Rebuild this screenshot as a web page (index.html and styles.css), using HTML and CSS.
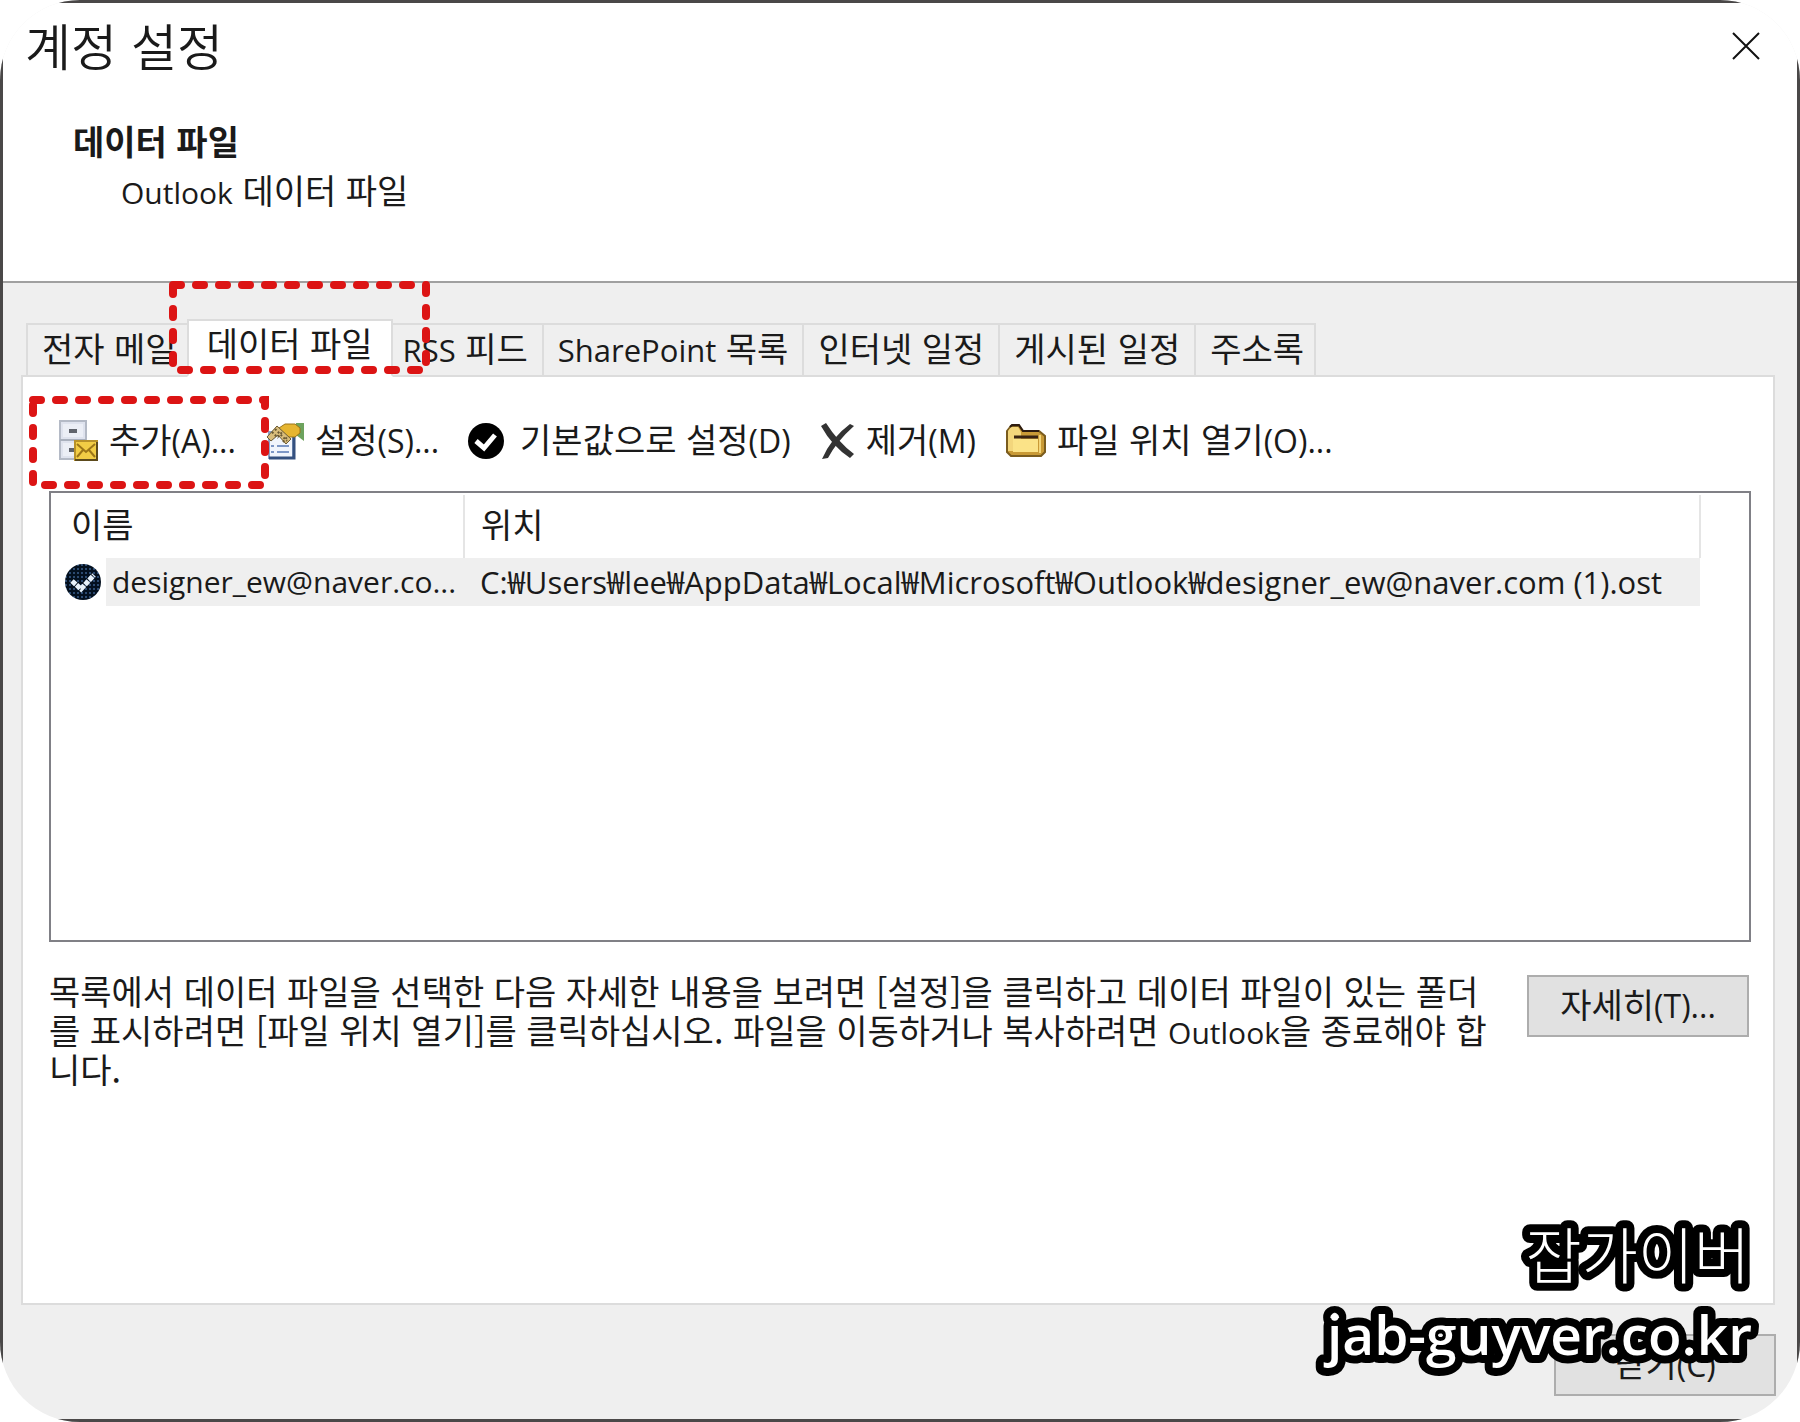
FILE: index.html
```html
<!DOCTYPE html>
<html lang="ko">
<head>
  <meta charset="UTF-8">
  <meta name="viewport" content="width=device-width, initial-scale=1.0">
  <title>계정 설정</title>
  <link rel="stylesheet" href="styles.css">
</head>
<body>
  <div class="frame">
    <div class="window">
      <!-- Header -->
      <header class="header">
        <div class="title-bar">
          <h1>계정 설정</h1>
          <button type="button" class="btn-close" aria-label="닫기">
            <svg width="28" height="28" viewBox="0 0 28 28"><path d="M1 1L27 27M27 1L1 27" stroke="#111" stroke-width="2" fill="none"/></svg>
          </button>
        </div>
        <h2>데이터 파일</h2>
        <p class="subtitle"><span class="latin">Outlook</span> 데이터 파일</p>
      </header>

      <main class="content">
        <!-- Tabs -->
        <div class="tabs" role="tablist">
          <button type="button" class="tab" role="tab">전자 메일</button>
          <button type="button" class="tab active" role="tab" aria-selected="true">데이터 파일</button>
          <button type="button" class="tab" role="tab"><span class="latin">RSS</span> 피드</button>
          <button type="button" class="tab" role="tab"><span class="latin">SharePoint</span> 목록</button>
          <button type="button" class="tab" role="tab">인터넷 일정</button>
          <button type="button" class="tab" role="tab">게시된 일정</button>
          <button type="button" class="tab" role="tab">주소록</button>
          <svg class="mark mark-tab" width="262" height="94" viewBox="0 0 262 94"><rect x="4" y="4" width="253" height="85"/></svg>
        </div>

        <section class="panel" role="tabpanel">
          <!-- Toolbar -->
          <div class="toolbar">
            <button type="button" class="tool">
              <svg width="40" height="42" viewBox="0 0 40 42">
                <path d="M1 1H27V39H1Z" fill="#dfe3ee" stroke="#b4bac6" stroke-width="2"/>
                <path d="M4 4H24V17H4ZM4 23H24V36H4Z" fill="#eceff6"/>
                <path d="M1 20H27" stroke="#a9b0bd" stroke-width="2"/>
                <path d="M10 11H18M10 30H16" stroke="#60646c" stroke-width="4"/>
                <path d="M16 21H38V40H16Z" fill="#f2cd45" stroke="#b8922a" stroke-width="2"/>
                <path d="M16 40H38V22" stroke="#5c4a1c" stroke-width="2" fill="none"/>
                <path d="M18 24L27 32L36 24M18 37L24 30M36 37L30 30" stroke="#9c7618" stroke-width="2" fill="none"/>
              </svg>
              <span>추가<span class="latin">(A)...</span></span>
            </button>
            <button type="button" class="tool">
              <svg width="40" height="42" viewBox="0 0 40 42">
                <path d="M4 12H28V38H4Z" fill="#f1f5fc" stroke="#8ba2c8" stroke-width="2"/>
                <path d="M4 38H29V14" fill="none" stroke="#34507f" stroke-width="3"/>
                <path d="M12 26H24M12 32H24M6 26H9M6 32H9" stroke="#7d97c6" stroke-width="2"/>
                <path d="M31 3H39V21L31 15Z" fill="#6da35e"/>
                <path d="M14 8L20 4H30L35 8V13L30 17H22L14 12Z" fill="#e6b530" stroke="#9a7418" stroke-width="1"/>
                <path d="M2 17L12 6L26 19L21 24L13 15L6 21Z" fill="#d9bd7c" stroke="#6b5a34" stroke-width="1"/>
                <path d="M7 12L13 18M10 9L22 21M13 17L18 11M18 22L23 16" stroke="#6b5a34" stroke-width="2" stroke-dasharray="2 2"/>
              </svg>
              <span>설정<span class="latin">(S)...</span></span>
            </button>
            <button type="button" class="tool">
              <svg width="42" height="38" viewBox="0 0 42 38">
                <circle cx="18" cy="19" r="18" fill="#000"/>
                <path d="M8 19L16 26L27 13" stroke="#fff" stroke-width="5" fill="none"/>
              </svg>
              <span>기본값으로 설정<span class="latin">(D)</span></span>
            </button>
            <button type="button" class="tool">
              <svg width="36" height="38" viewBox="0 0 36 38">
                <path d="M1 4L6 1Q18 20 34 32L30 36Q12 24 1 4Z" fill="#333"/>
                <path d="M30 2L34 4Q17 19 8 36L2 37Q11 16 30 2Z" fill="#333"/>
              </svg>
              <span>제거<span class="latin">(M)</span></span>
            </button>
            <button type="button" class="tool">
              <svg width="42" height="36" viewBox="0 0 42 36">
                <path d="M2 29V8L6 3H14L18 8H34L40 13V29L36 33H6Z" fill="#c99a36" stroke="#7a5c1e" stroke-width="2"/>
                <path d="M3 28V8L6 4H13L16 9V28Z" fill="#f3d67c"/>
                <path d="M5 4L7 2H14L18 8H34" fill="none" stroke="#2e1c10" stroke-width="2"/>
                <path d="M9 14H33" stroke="#3a2412" stroke-width="3"/>
                <path d="M8 16H33V29H8Z" fill="#fbe388"/>
                <path d="M35 12V30" stroke="#f3d67c" stroke-width="2"/>
              </svg>
              <span>파일 위치 열기<span class="latin">(O)...</span></span>
            </button>
            <svg class="mark mark-tool" width="241" height="94" viewBox="0 0 241 94"><rect x="4" y="4" width="232" height="85"/></svg>
          </div>

          <!-- Data file list -->
          <div class="list">
            <table>
              <thead>
                <tr>
                  <th class="col-name">이름</th>
                  <th>위치</th>
                </tr>
              </thead>
              <tbody>
                <tr>
                  <td class="cell-name">
                    <div class="file">
                      <svg width="38" height="38" viewBox="0 0 38 38">
                        <defs>
                          <pattern id="dots" width="4" height="4" patternUnits="userSpaceOnUse">
                            <rect width="4" height="4" fill="#03101f"/>
                            <rect x="1" y="1" width="2" height="2" fill="#2c4a70"/>
                          </pattern>
                        </defs>
                        <circle cx="19" cy="19" r="18" fill="url(#dots)"/>
                        <path d="M8 18L17 26L30 12" stroke="#e8f2fb" stroke-width="5" stroke-dasharray="5 1" fill="none"/>
                      </svg>
                      <span class="latin">designer_ew@naver.co...</span>
                    </div>
                  </td>
                  <td class="cell-path"><span class="latin">C:₩Users₩lee₩AppData₩Local₩Microsoft₩Outlook₩designer_ew@naver.com (1).ost</span></td>
                </tr>
              </tbody>
            </table>
          </div>

          <!-- Help text -->
          <div class="help">
            <p>목록에서 데이터 파일을 선택한 다음 자세한 내용을 보려면 [설정]을 클릭하고 데이터 파일이 있는 폴더<br>를 표시하려면 [파일 위치 열기]를 클릭하십시오. 파일을 이동하거나 복사하려면 <span class="latin">Outlook</span>을 종료해야 합<br>니다.</p>
            <button type="button" class="btn">자세히<span class="latin">(T)...</span></button>
          </div>
        </section>
      </main>

      <footer class="footer">
        <button type="button" class="btn">닫기<span class="latin">(C)</span></button>
      </footer>
    </div>

    <!-- Watermark -->
    <svg class="watermark" width="520" height="220" viewBox="0 0 520 220">
      <text class="mark-name" x="470" y="77">잡가이버</text>
      <text class="mark-url" x="472" y="153">jab-guyver.co.kr</text>
    </svg>
  </div>
</body>
</html>
```
FILE: styles.css
```css
/* Global reset */
* {
  margin: 0;
  padding: 0;
  box-sizing: border-box;
}

body {
  font-family: 'Noto Sans CJK KR', sans-serif;
  font-size: 34px;
  line-height: 40px;
  color: #1a1a1a;
  background-color: #fff;
}

button {
  font: inherit;
  color: inherit;
  cursor: pointer;
}

svg {
  display: block;
  flex: none;
}

.latin {
  font-family: 'Open Sans', 'Noto Sans CJK KR', sans-serif;
  font-size: 30px;
  line-height: 1;
}

/* Window */
.frame {
  position: relative;
  display: flex;
  min-height: 100vh;
  border-radius: 80px;
  overflow: hidden;
}

.window {
  flex: 1;
  display: flex;
  flex-direction: column;
  background-color: #efefef;
  border: 3px solid #4a4848;
}

/* Header */
.header {
  height: 280px;
  background-color: #fff;
  border-bottom: 2px solid #a0a0a0;
}

.title-bar {
  display: flex;
  justify-content: space-between;
  align-items: center;
  height: 86px;
  padding: 0 37px 4px 22px;
}

h1 {
  font-size: 50px;
  font-weight: 350;
}

.btn-close {
  padding-top: 4px;
  background: none;
  border: none;
}

h2 {
  margin: 32px 0 9px 70px;
  font-size: 34px;
  font-weight: bold;
}

.subtitle {
  margin-left: 118px;
}

/* Tabs */
.content {
  flex: 1;
  display: flex;
  flex-direction: column;
  padding: 36px 22px 0 18px;
}

.tabs {
  position: relative;
  display: flex;
  align-items: flex-end;
  height: 58px;
  padding-left: 5px;
  margin-bottom: -2px;
}

.tab {
  height: 54px;
  padding: 0 14px 4px;
  background-color: #efefef;
  border: 2px solid #dcdcdc;
  border-right-width: 0;
  white-space: nowrap;
}

.tab:first-child {
  padding-right: 10px;
}

.tab:nth-last-child(2) {
  padding-right: 10px;
  border-right-width: 2px;
}

.tab.active {
  height: 58px;
  padding: 0 18px 10px;
  background-color: #fff;
  border-bottom-color: #fff;
  border-right-width: 2px;
}

.tab.active + .tab {
  padding-left: 10px;
  border-left-width: 0;
}

.tab .latin {
  font-size: 31px;
}

/* Highlight boxes */
.mark {
  position: absolute;
  fill: none;
  stroke: #dc1414;
  stroke-width: 8;
  stroke-linecap: round;
  stroke-dasharray: 8 15;
  pointer-events: none;
}

.mark-tab {
  left: 148px;
  top: -38px;
}

.mark-tool {
  left: -20px;
  top: -15px;
}

/* Panel */
.panel {
  flex: 1;
  padding: 34px 22px 0 26px;
  background-color: #fff;
  border: 2px solid #dcdcdc;
}

.toolbar {
  position: relative;
  display: flex;
  gap: 29px;
  height: 80px;
  padding-left: 10px;
}

.tool {
  display: flex;
  align-items: center;
  gap: 10px;
  height: 60px;
  background: none;
  border: none;
  white-space: nowrap;
}

.tool > span {
  padding-bottom: 4px;
}

.tool .latin,
.btn .latin {
  font-size: 32px;
}

/* List */
.list {
  height: 451px;
  padding: 2px 48px 0 0;
  border: 2px solid #808086;
}

table {
  width: 100%;
  border-collapse: collapse;
  table-layout: fixed;
}

th {
  height: 63px;
  padding: 0 16px 6px;
  font-weight: normal;
  text-align: left;
  border-right: 2px solid #e5e5e5;
}

.col-name {
  width: 413px;
  padding-left: 20px;
}

td {
  height: 48px;
  white-space: nowrap;
}

.cell-name {
  padding-left: 13px;
}

.cell-path {
  padding: 0 0 4px 16px;
  background-color: #efefef;
}

.cell-path .latin {
  font-size: 31px;
}

.file {
  display: flex;
  align-items: center;
  gap: 4px;
}

.file .latin {
  flex: 1;
  padding-left: 6px;
  line-height: 48px;
  background-color: #efefef;
}

/* Help text */
.help {
  display: flex;
  justify-content: space-between;
  align-items: flex-start;
  padding: 29px 2px 0 0;
}

.help p {
  line-height: 39px;
  white-space: nowrap;
}

.help .btn {
  margin-top: 4px;
}

.btn {
  width: 222px;
  height: 62px;
  padding-bottom: 4px;
  background-color: #e1e1e1;
  border: 2px solid #adadad;
}

/* Footer */
.footer {
  display: flex;
  justify-content: flex-end;
  padding: 29px 21px 23px 0;
}

/* Watermark */
.watermark {
  position: absolute;
  right: 0;
  bottom: 0;
  fill: #fff;
  stroke: #000;
  stroke-width: 16;
  stroke-linejoin: round;
  text-anchor: end;
  paint-order: stroke;
  pointer-events: none;
}

.mark-name {
  font-size: 61px;
  font-weight: 300;
}

.mark-url {
  font-family: 'Open Sans', sans-serif;
  font-size: 55px;
  font-weight: 600;
}
```
